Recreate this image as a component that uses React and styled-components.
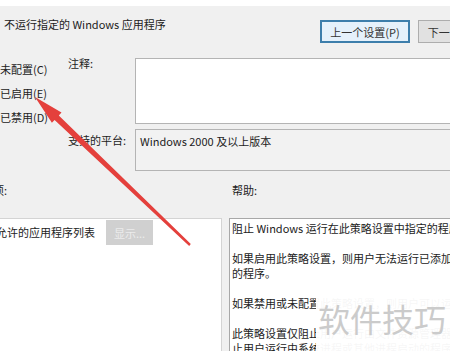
import React from 'react'
import styled, { createGlobalStyle } from "styled-components"

const Global = createGlobalStyle`
    html, body {
        margin: 0;
        padding: 0;
        background: #f0f0f0;
    }
`

const Page = styled.div`
    position: relative;
    width: 450px;
    height: 351px;
    overflow: hidden;
    background: #f0f0f0;
    font-family: "Noto Sans CJK SC", "Noto Sans", sans-serif;
    font-size: 11px;
    color: #222;
`

const Frame = styled.div`
    width: 520px;
    display: flex;
    flex-direction: column;
`

const TopStrip = styled.div`
    height: 6px;
    background: #fff;
`

const Header = styled.div`
    height: 52px;
    display: flex;
    align-items: flex-start;
    padding: 11px 12px 0 4px;
    box-sizing: border-box;
`

const Title = styled.div`
    flex: 1;
    line-height: 15px;
    white-space: nowrap;
`

const ButtonGroup = styled.div`
    display: flex;
    gap: 8px;
    margin-top: 3px;
`

const Button = styled.div`
    width: 90px;
    height: 23px;
    box-sizing: border-box;
    display: flex;
    align-items: center;
    justify-content: center;
    white-space: nowrap;
    background: ${p => p.$primary ? "#e5f1fb" : "#e1e1e1"};
    border: ${p => p.$primary ? "2px solid #3d7eab" : "1px solid #adadad"};
    color: #333;
`

const Settings = styled.div`
    display: flex;
    height: 114px;
`

const RadioGroup = styled.div`
    width: 68px;
    flex: none;
    display: flex;
    flex-direction: column;
    gap: 9px;
    padding-top: 4px;
`

const Radio = styled.div`
    line-height: 15px;
    white-space: nowrap;
`

const Fields = styled.div`
    flex: 1;
    min-width: 0;
    display: grid;
    grid-template-columns: 67px 1fr;
    grid-template-rows: 66px 42px;
    row-gap: 5px;
`

const FieldLabel = styled.div`
    line-height: 11px;
    padding-top: ${p => p.$top}px;
    white-space: nowrap;
`

const Box = styled.div`
    box-sizing: border-box;
    border: 1px solid #b4b4b4;
    border-right: none;
    background: ${p => p.$readonly ? "#f2f2f2" : "#fff"};
    padding: 5px 4px;
    line-height: 13px;
    white-space: nowrap;
`

const SectionRow = styled.div`
    display: flex;
    height: 46px;
    gap: 7px;
`

const SectionLabel = styled.div`
    width: ${p => p.$width ? p.$width + "px" : "auto"};
    flex: ${p => p.$width ? "none" : 1};
    padding: 12px 0 0 ${p => p.$pad || 0}px;
    line-height: 13px;
    white-space: nowrap;
    overflow: hidden;
`

const Offset = styled.span`
    display: inline-block;
    margin-left: ${p => p.$left}px;
`

const Panels = styled.div`
    display: flex;
    gap: 7px;
    height: 140px;
`

const OptionsPanel = styled.div`
    width: 222px;
    flex: none;
    box-sizing: border-box;
    background: #fff;
    border: 1px solid #d4d4d4;
    border-left: none;
    overflow: hidden;
`

const OptionRow = styled.div`
    display: flex;
    align-items: center;
    margin-top: 1px;
    white-space: nowrap;
`

const OptionText = styled.div`
    margin-left: -15px;
    width: 121px;
    flex: none;
    line-height: 15px;
`

const DisabledButton = styled.div`
    width: 47px;
    height: 25px;
    display: flex;
    align-items: center;
    justify-content: center;
    background: #d0d0d0;
    color: #ececec;
`

const HelpPanel = styled.div`
    flex: 1;
    min-width: 0;
    overflow: hidden;
    box-sizing: border-box;
    background: #fff;
    border: 1px solid #a8a8a8;
    border-right: none;
    padding: 2px 0 0 2px;
`

const HelpPara = styled.div`
    margin-bottom: 15px;
`

const HelpLine = styled.div`
    line-height: 15px;
    white-space: nowrap;
`

const Watermark = styled.div`
    position: absolute;
    left: 316px;
    top: 286px;
    right: 0;
    bottom: 0;
    background: rgba(255, 255, 255, 0.96);
    padding: 12px 0 0 2px;
    font-size: 32px;
    line-height: 40px;
    color: #cbcbcb;
    white-space: nowrap;
`

const Overlay = styled.svg`
    position: absolute;
    left: 0;
    top: 0;
    pointer-events: none;
`

const help = [
    ["阻止 Windows 运行在此策略设置中指定的程序。"],
    ["如果启用此策略设置，则用户无法运行已添加到不允许的应用程序列表中", "的程序。"],
    ["如果禁用或未配置此策略设置，则用户可以运行任何程序。"],
    ["此策略设置仅阻止用户运行由文件资源管理器进程启动的程序。它不阻", "止用户运行由系统进程或其他进程启动的程序。"],
]

export default function App() {
    return (
        <Page>
            <Global />
            <Frame>
                <TopStrip />
                <Header>
                    <Title>不运行指定的 Windows 应用程序</Title>
                    <ButtonGroup>
                        <Button $primary>上一个设置(P)</Button>
                        <Button>下一个设置(N)</Button>
                    </ButtonGroup>
                </Header>
                <Settings>
                    <RadioGroup>
                        <Radio>未配置(C)</Radio>
                        <Radio>已启用(E)</Radio>
                        <Radio>已禁用(D)</Radio>
                    </RadioGroup>
                    <Fields>
                        <FieldLabel $top={0}>注释:</FieldLabel>
                        <Box />
                        <FieldLabel $top={6}>支持的平台:</FieldLabel>
                        <Box $readonly>Windows 2000 及以上版本</Box>
                    </Fields>
                </Settings>
                <SectionRow>
                    <SectionLabel $width={222}><Offset $left={-18}>选项:</Offset></SectionLabel>
                    <SectionLabel $pad={3}>帮助:</SectionLabel>
                </SectionRow>
                <Panels>
                    <OptionsPanel>
                        <OptionRow>
                            <OptionText>不允许的应用程序列表</OptionText>
                            <DisabledButton>显示...</DisabledButton>
                        </OptionRow>
                    </OptionsPanel>
                    <HelpPanel>
                        {help.map((para, i) => (
                            <HelpPara key={i}>
                                {para.map((line, j) => <HelpLine key={j}>{line}</HelpLine>)}
                            </HelpPara>
                        ))}
                    </HelpPanel>
                </Panels>
            </Frame>
            <Watermark>软件技巧</Watermark>
            <Overlay width="450" height="351" viewBox="0 0 450 351">
                <polygon
                    points="35,97 61.5,112.6 58.8,115.5 190.8,244.1 189.2,245.9 54.6,119.9 51.9,122.8"
                    fill="#e4403c"
                />
            </Overlay>
        </Page>
    )
}
